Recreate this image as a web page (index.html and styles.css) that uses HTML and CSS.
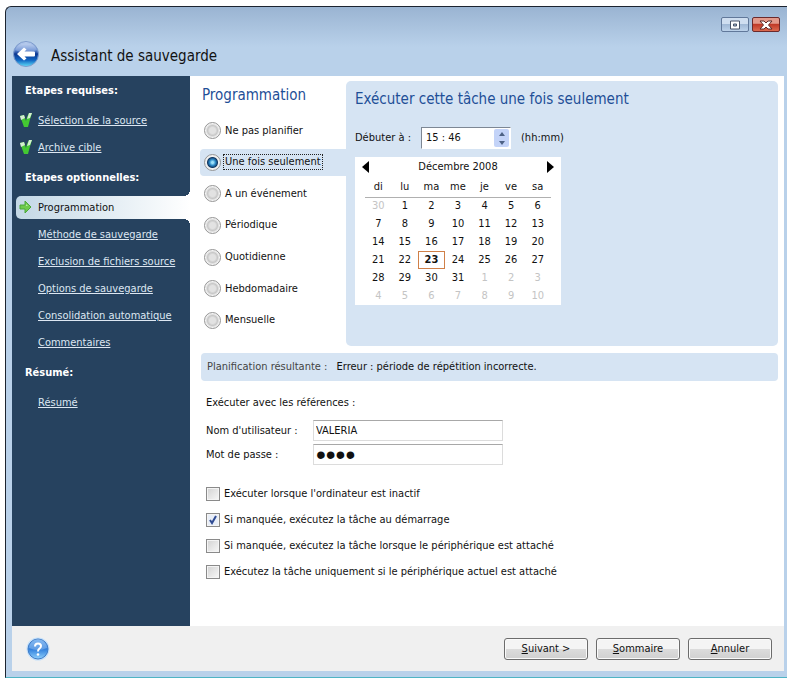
FILE: index.html
```html
<!DOCTYPE html>
<html lang="fr">
<head>
  <meta charset="UTF-8">
  <title>Assistant de sauvegarde</title>
  <link rel="stylesheet" href="styles.css">
</head>
<body>
  <div class="window">
    <header class="titlebar">
      <button class="back" aria-label="Retour">
        <svg width="28" height="28" viewBox="0 0 28 28">
          <defs>
            <linearGradient id="backFill" x1="0" y1="0" x2="0" y2="1">
              <stop offset="0" stop-color="#c4d6f2"/>
              <stop offset="0.35" stop-color="#5d86d0"/>
              <stop offset="0.5" stop-color="#0a3590"/>
              <stop offset="0.75" stop-color="#1268c4"/>
              <stop offset="1" stop-color="#5fe0fa"/>
            </linearGradient>
          </defs>
          <circle cx="14" cy="14" r="12.500" fill="url(#backFill)" stroke="#7d9bcc"/>
          <path d="M3 10a11.500 9 0 0 1 22 0q-11 5-22 0z" fill="#fff" opacity="0.2"/>
          <path d="M5 14l7-6.500 2.500 2-2 2H22q1 0 1 1v3q0 1-1 1h-9.500l2 2-2.500 2z" fill="#fff"/>
        </svg>
      </button>
      <h1>Assistant de sauvegarde</h1>
      <div class="controls">
        <button class="ctrl" aria-label="Agrandir">
          <svg width="12" height="10" viewBox="0 0 12 10">
            <path d="M1.500 1h9v8h-9z" fill="#fff" stroke="#4a5568"/>
            <path d="M4.500 4h3v2h-3z" fill="#9db4d0" stroke="#4a5568"/>
          </svg>
        </button>
        <button class="ctrl close" aria-label="Fermer">
          <svg width="14" height="10" viewBox="0 0 14 10">
            <path d="M1 1h4l2 2 2-2h4L9.500 5 13 9H9L7 7 5 9H1l3.500-4z" fill="#fff" stroke="#5c2a2a"/>
          </svg>
        </button>
      </div>
    </header>

    <div class="body">
      <nav class="steps">
        <h2>Etapes requises:</h2>
        <ul>
          <li>
            <svg class="mark" width="13" height="14" viewBox="0 0 13 14"><path d="M0 3l4-1 2 6q1-5 3-8h3q-2 6-4 14H4z" fill="#43c832"/><path d="M0 3l4-1 1 3-4 2zM9 0h3l-2 5-3 1z" fill="#d5edd2"/></svg>
            <a href="#">Sélection de la source</a>
          </li>
          <li>
            <svg class="mark" width="13" height="14" viewBox="0 0 13 14"><path d="M0 3l4-1 2 6q1-5 3-8h3q-2 6-4 14H4z" fill="#43c832"/><path d="M0 3l4-1 1 3-4 2zM9 0h3l-2 5-3 1z" fill="#d5edd2"/></svg>
            <a href="#">Archive cible</a>
          </li>
        </ul>
        <h2>Etapes optionnelles:</h2>
        <ul>
          <li class="active">
            <svg class="mark" width="13" height="14" viewBox="0 0 13 14"><path d="M1 5h5V1l6 6-6 6V9H1z" fill="#6fcb4c" stroke="#4aa83a"/><path d="M2 6h5V4l2 2z" fill="#b6eb9c"/></svg>
            <span>Programmation</span>
          </li>
          <li><a href="#">Méthode de sauvegarde</a></li>
          <li><a href="#">Exclusion de fichiers source</a></li>
          <li><a href="#">Options de sauvegarde</a></li>
          <li><a href="#">Consolidation automatique</a></li>
          <li><a href="#">Commentaires</a></li>
        </ul>
        <h2>Résumé:</h2>
        <ul>
          <li><a href="#">Résumé</a></li>
        </ul>
      </nav>

      <main class="content">
        <div class="schedule">
          <section class="modes">
            <h2>Programmation</h2>
            <div class="mode-list">
              <label><input type="radio" name="mode"><span>Ne pas planifier</span></label>
              <label class="selected"><input type="radio" name="mode" checked><span>Une fois seulement</span></label>
              <label><input type="radio" name="mode"><span>A un événement</span></label>
              <label><input type="radio" name="mode"><span>Périodique</span></label>
              <label><input type="radio" name="mode"><span>Quotidienne</span></label>
              <label><input type="radio" name="mode"><span>Hebdomadaire</span></label>
              <label><input type="radio" name="mode"><span>Mensuelle</span></label>
            </div>
          </section>

          <section class="panel">
            <h2>Exécuter cette tâche une fois seulement</h2>
            <div class="time">
              <label for="start">Débuter à :</label>
              <div class="spinner">
                <input type="text" id="start" value="15 : 46">
                <div class="spin">
                  <button aria-label="Plus"><svg width="6" height="4" viewBox="0 0 6 4"><path d="M0 4l3-4 3 4z" fill="#4d6185"/></svg></button>
                  <button aria-label="Moins"><svg width="6" height="4" viewBox="0 0 6 4"><path d="M0 0l3 4 3-4z" fill="#4d6185"/></svg></button>
                </div>
              </div>
              <span>(hh:mm)</span>
            </div>
            <div class="calendar">
              <div class="month">
                <button aria-label="Mois précédent"><svg width="7" height="12" viewBox="0 0 7 12"><path d="M7 0v12L0 6z"/></svg></button>
                <span>Décembre 2008</span>
                <button aria-label="Mois suivant"><svg width="7" height="12" viewBox="0 0 7 12"><path d="M0 0v12l7-6z"/></svg></button>
              </div>
              <table>
                <thead>
                  <tr><th>di</th><th>lu</th><th>ma</th><th>me</th><th>je</th><th>ve</th><th>sa</th></tr>
                </thead>
                <tbody>
                  <tr><td class="out">30</td><td>1</td><td>2</td><td>3</td><td>4</td><td>5</td><td>6</td></tr>
                  <tr><td>7</td><td>8</td><td>9</td><td>10</td><td>11</td><td>12</td><td>13</td></tr>
                  <tr><td>14</td><td>15</td><td>16</td><td>17</td><td>18</td><td>19</td><td>20</td></tr>
                  <tr><td>21</td><td>22</td><td class="today">23</td><td>24</td><td>25</td><td>26</td><td>27</td></tr>
                  <tr><td>28</td><td>29</td><td>30</td><td>31</td><td class="out">1</td><td class="out">2</td><td class="out">3</td></tr>
                  <tr><td class="out">4</td><td class="out">5</td><td class="out">6</td><td class="out">7</td><td class="out">8</td><td class="out">9</td><td class="out">10</td></tr>
                </tbody>
              </table>
            </div>
          </section>
        </div>

        <p class="result"><span>Planification résultante :</span> <span class="error">Erreur : période de répétition incorrecte.</span></p>

        <p class="intro">Exécuter avec les références :</p>
        <div class="credentials">
          <label for="user">Nom d'utilisateur :</label>
          <input type="text" id="user" value="VALERIA">
          <label for="pass">Mot de passe :</label>
          <input type="password" id="pass" value="abcd">
        </div>

        <div class="options">
          <label><input type="checkbox"><span>Exécuter lorsque l'ordinateur est inactif</span></label>
          <label><input type="checkbox" checked><span>Si manquée, exécutez la tâche au démarrage</span></label>
          <label><input type="checkbox"><span>Si manquée, exécutez la tâche lorsque le périphérique est attaché</span></label>
          <label><input type="checkbox"><span>Exécutez la tâche uniquement si le périphérique actuel est attaché</span></label>
        </div>
      </main>
    </div>

    <footer class="footer">
      <button class="help" aria-label="Aide">
        <svg width="24" height="24" viewBox="0 0 24 24">
          <defs>
            <linearGradient id="helpFill" x1="0" y1="0" x2="0" y2="1">
              <stop offset="0" stop-color="#5aa2ee"/>
              <stop offset="0.5" stop-color="#2f7edc"/>
              <stop offset="1" stop-color="#8fd0fb"/>
            </linearGradient>
          </defs>
          <circle cx="12" cy="12" r="11.500" fill="#c4e0fa"/>
          <circle cx="12" cy="12" r="10" fill="url(#helpFill)" stroke="#3f7cc8"/>
          <path d="M3 11a9 9 0 0 1 18 0q-9 4-18 0z" fill="#fff" opacity="0.25"/>
          <path d="M9 9.500q0-3 3-3t3 2.500q0 1.500-1.500 2.500T12 14.500" fill="none" stroke="#fff" stroke-width="2"/>
          <circle cx="12" cy="17.500" r="1.300" fill="#fff"/>
        </svg>
      </button>
      <button class="btn"><u>S</u>uivant &gt;</button>
      <button class="btn"><u>S</u>ommaire</button>
      <button class="btn"><u>A</u>nnuler</button>
    </footer>
  </div>
</body>
</html>
```
FILE: styles.css
```css
* { box-sizing: border-box; }
body {
  margin: 0;
  padding: 6px 0 0 5px;
  min-height: 100vh;
  display: flex;
  background: #fff;
  color: #111;
  font: 11px/14px "DejaVu Sans Condensed", Tahoma, sans-serif;
}
h1, h2, p, ul { margin: 0; padding: 0; font-weight: normal; }
ul { list-style: none; }
button, input { font: inherit; color: inherit; }
button { padding: 0; border: none; background: none; }

.window {
  flex: 1;
  display: flex;
  flex-direction: column;
  padding: 0 3px 6px 6px;
  margin-bottom: 1px;
  border: 1px solid #1c2430;
  border-right: none;
  border-bottom: 1px solid #4fb4c4;
  border-radius: 6px 0 0 0;
  background: linear-gradient(#9ab4d2, #b9d1ea 40px);
}

/* title bar */
.titlebar { display: flex; align-items: flex-end; gap: 11px; height: 69px; padding-bottom: 8px; position: relative; }
.titlebar h1 { font-size: 15px; line-height: 24px; }
.back { height: 28px; }
.back svg, .help svg { display: block; }
.controls { position: absolute; top: 10px; right: 4px; display: flex; gap: 3px; }
.ctrl {
  display: flex; align-items: center; justify-content: center;
  width: 28px; height: 15px; border: 1px solid #61789a; border-radius: 2px;
  background: linear-gradient(#cfdef0 45%, #a1b9d6 50%, #bcd2ea);
}
.close { border-color: #6b2a2c; background: linear-gradient(#e39a8c 40%, #c03a28 50%, #dc6a50); }

.body { flex: 1; display: flex; }

/* steps */
.steps { width: 178px; padding: 5px 0 0; background: #26425f; color: #fff; }
.steps h2 { padding-left: 13px; font-size: 11px; font-weight: bold; line-height: 20px; font-family: "DejaVu Sans Condensed", Tahoma, sans-serif; }
.steps ul { display: flex; flex-direction: column; gap: 4px; padding: 8px 0 9px; }
.steps li { display: flex; align-items: center; height: 23px; padding-left: 26px; position: relative; white-space: nowrap; }
.steps a { color: #dde7f2; }
.mark { position: absolute; left: 8px; top: 4px; }
.steps .active {
  margin-left: 4px; padding-left: 22px; color: #111;
  border-radius: 5px 0 0 5px; background: linear-gradient(90deg, #c3d8e6, #fff);
}
.active .mark { left: 3px; }
.active::before, .active::after { content: ""; position: absolute; right: 0; width: 6px; height: 6px; }
.active::before { bottom: 100%; background: radial-gradient(circle at 0 0, #26425f 6px, #fff 6px); }
.active::after { top: 100%; background: radial-gradient(circle at 0 100%, #26425f 6px, #fff 6px); }

/* content */
.content { flex: 1; padding: 5px 6px 16px 10px; background: #fff; }
.schedule { display: flex; }
.modes { width: 146px; display: flex; flex-direction: column; padding-bottom: 12px; }
.content h2 { font-size: 15px; line-height: 28px; color: #1f4f97; }
.modes h2 { padding-left: 2px; margin-bottom: 8px; }
.mode-list { flex: 1; display: flex; flex-direction: column; justify-content: space-between; }
.mode-list label { display: flex; align-items: center; gap: 2px; height: 27px; padding-left: 4px; border-radius: 4px 0 0 4px; white-space: nowrap; }
.mode-list span { padding: 0 1px; border: 1px solid transparent; }
.mode-list .selected { background: #d6e4f3; }
.selected span { border: 1px dotted #222; }
input[type="radio"] {
  appearance: none; width: 17px; height: 17px; margin: 0; flex: none;
  border: 1px solid #959595; border-radius: 50%;
  background: radial-gradient(circle, #e2e2e2 3px, #c8c8c8 5px, #f4f4f4 7px);
}
input[type="radio"]:checked { background: radial-gradient(circle, #9be0fa 1px, #2c8ac8 3px, #123a66 5px, #f0f0f0 6px); }

.panel { flex: 1; padding: 4px 9px 41px; border-radius: 5px; background: #d6e4f3; }
.time { display: flex; align-items: center; gap: 10px; margin: 14px 0 8px; }
.spinner { display: flex; width: 90px; height: 22px; padding: 1px; border: 1px solid #fff; border-top-color: #7d8794; border-left-color: #7d8794; background: #fff; }
.spinner input { flex: 1; min-width: 0; padding: 0 3px; border: none; background: none; }
.spin { display: flex; flex-direction: column; width: 15px; border-radius: 2px; background: #c3d3f8; }
.spin button { flex: 1; display: flex; align-items: center; justify-content: center; }
.calendar { width: 206px; padding: 0 10px; background: #fff; }
.month { display: flex; align-items: center; justify-content: space-between; height: 20px; margin: 0 -3px; }
.month button { display: flex; }
table { width: 100%; border-collapse: collapse; table-layout: fixed; text-align: center; }
th { height: 20px; padding: 0; font-weight: normal; border-bottom: 1px solid #b0b0b0; }
td { height: 18px; padding: 0; }
.out { color: #c4c4c4; }
.today { font-weight: bold; outline: 1px solid #d08048; outline-offset: -1px; }

.result { margin: 7px 0 15px 1px; padding: 7px 6px; border-radius: 4px; background: #d6e4f3; color: #444; }
.result .error { margin-left: 6px; color: #111; }
.intro { padding-left: 6px; margin-bottom: 10px; }
.credentials { display: grid; grid-template-columns: 107px 190px; row-gap: 3px; align-items: center; padding-left: 6px; }
.credentials input { height: 21px; padding: 0 2px; border: 1px solid #dcdcdc; border-top-color: #a8a8a8; background: #fff; }
.credentials input[type="password"] { font-family: "Liberation Sans", Arial, sans-serif; font-size: 28px; }
.options { display: flex; flex-direction: column; gap: 12px; margin-top: 22px; padding-left: 6px; }
.options label { display: flex; align-items: center; gap: 4px; }
input[type="checkbox"] {
  appearance: none; width: 14px; height: 14px; margin: 0; flex: none;
  border: 1px solid #8a8a8a; background: linear-gradient(135deg, #d2d2d2, #f8f8f8); box-shadow: inset 0 0 0 1px #f4f4f4;
}
input[type="checkbox"]:checked {
  background: #e8eef8 url("data:image/svg+xml,%3Csvg xmlns='http://www.w3.org/2000/svg' viewBox='0 0 12 12'%3E%3Cpath d='M3 6l2 3 4-7' fill='none' stroke='%23304c94' stroke-width='2'/%3E%3C/svg%3E") center / 12px 12px no-repeat;
}

/* footer */
.footer { display: flex; align-items: center; gap: 8px; height: 45px; padding: 0 12px 0 14px; background: #f0f0f0; }
.help { margin-right: auto; }
.btn {
  width: 84px; height: 22px; border: 1px solid #6c6c6c; border-radius: 3px;
  background: linear-gradient(#f4f4f4 50%, #dcdcdc 50%, #d0d0d0); box-shadow: inset 0 0 0 1px #fafafa;
}
```
